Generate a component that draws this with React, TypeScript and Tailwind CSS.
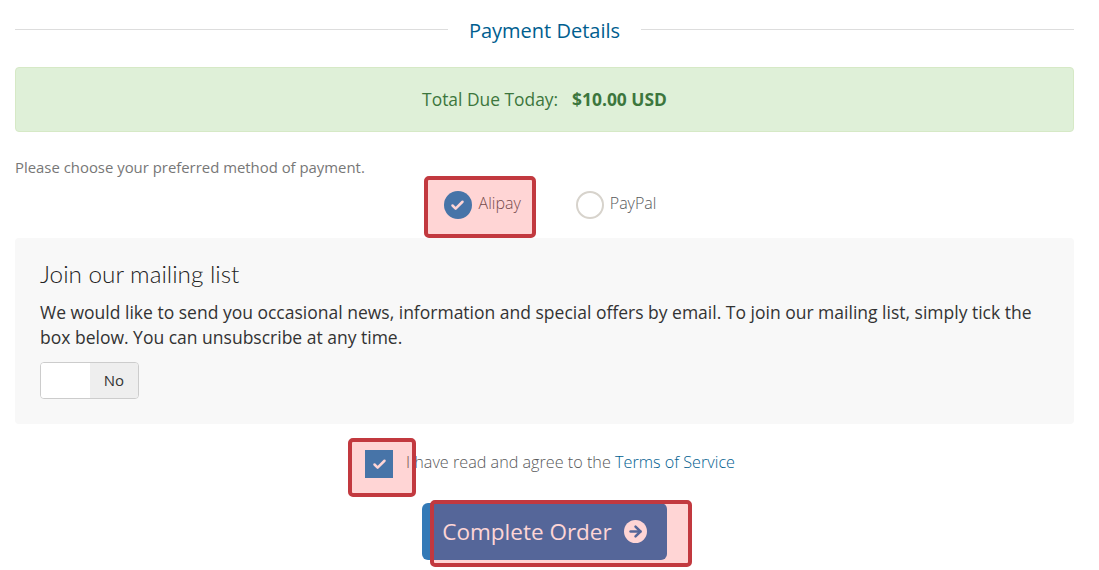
import { ArrowRight, Check } from "lucide-react";

const Highlight = ({ className }: { className: string }) => (
  <div
    className={`absolute rounded-[5px] border-4 border-[#c2393f] bg-[#ff0000]/[0.165] ${className}`}
  />
);

const App = () => {
  return (
    <div className="relative h-[570px] w-[1099px] overflow-hidden bg-white pl-[15px] pr-[25px] font-['Open_Sans',sans-serif] text-[16px] text-[#333]">
      <div className="flex h-[67px] items-start pt-[20px]">
        <div className="mt-[9px] h-px flex-1 bg-[#ddd]" />
        <h2 className="px-[21px] text-[20px] leading-[22px] font-normal text-[#005e8f]">Payment Details</h2>
        <div className="mt-[9px] h-px flex-1 bg-[#ddd]" />
      </div>

      <div className="flex h-[65px] items-center justify-center gap-[14px] rounded-[4px] border border-[#d6e9c6] bg-[#dff0d8] text-[17.4px] text-[#3c763d]">
        <span>Total Due Today:</span>
        <strong className="font-bold">$10.00 USD</strong>
      </div>

      <p className="mt-[25px] text-[14.9px] leading-[20px] text-[#777]">Please choose your preferred method of payment.</p>

      <div className="flex h-[61px] items-start justify-center gap-[55px] pl-[11px] pt-[14px] text-[16px] font-light text-[#58595b]">
        <label className="flex items-center gap-[7px]">
          <span className="flex size-[28px] items-center justify-center rounded-full bg-[#238bc9]">
            <Check className="size-[15px] text-white" strokeWidth={4} />
          </span>
          <span className="relative top-[-2px]">Alipay</span>
        </label>
        <label className="flex items-center gap-[6px]">
          <span className="size-[28px] rounded-full border-2 border-[#d7d3cc] bg-white" />
          <span className="relative top-[-2px]">PayPal</span>
        </label>
      </div>

      <div className="h-[186px] rounded-[4px] bg-[#f8f8f8] px-[25px] pt-[23px]">
        <h3 className="font-['Lato',sans-serif] text-[24.3px] leading-[26px] font-light text-[#222]">Join our mailing list</h3>
        <p className="mt-[13px] text-[17.5px] leading-[25px] text-[#333]">
          We would like to send you occasional news, information and special offers by email. To join our mailing list, simply tick the box below. You can unsubscribe at any time.
        </p>
        <div className="mt-[12px] flex h-[37px] w-[99px] overflow-hidden rounded-[4px] border border-[#ccc] text-[15px]">
          <div className="w-[49px] bg-white" />
          <div className="flex flex-1 items-center justify-center bg-[#eeeeee] text-[#333]">No</div>
        </div>
      </div>

      <div className="mt-[26px] flex h-[28px] items-center justify-center gap-[13px] pl-[11px] text-[16.2px] font-light text-[#58595b]">
        <span className="flex size-[28px] items-center justify-center bg-[#238bc9]">
          <Check className="size-[15px] text-white" strokeWidth={4} />
        </span>
        <span className="relative top-[-2px]">
          I have read and agree to the <a className="text-[#005e8f]">Terms of Service</a>
        </span>
      </div>

      <div className="mt-[25px] flex justify-center">
        <button className="flex h-[57px] w-[245px] items-center justify-center gap-[12px] rounded-[6px] bg-[#337ab7] text-[22.5px] text-white">
          Complete Order
          <span className="flex size-[23px] items-center justify-center rounded-full bg-white">
            <ArrowRight className="size-[17px] text-[#337ab7]" strokeWidth={3.5} />
          </span>
        </button>
      </div>

      <Highlight className="left-[424px] top-[176px] h-[62px] w-[112px]" />
      <Highlight className="left-[348px] top-[438px] h-[59px] w-[68px]" />
      <Highlight className="left-[430px] top-[500px] h-[67px] w-[262px]" />
    </div>
  );
};

export default App;
